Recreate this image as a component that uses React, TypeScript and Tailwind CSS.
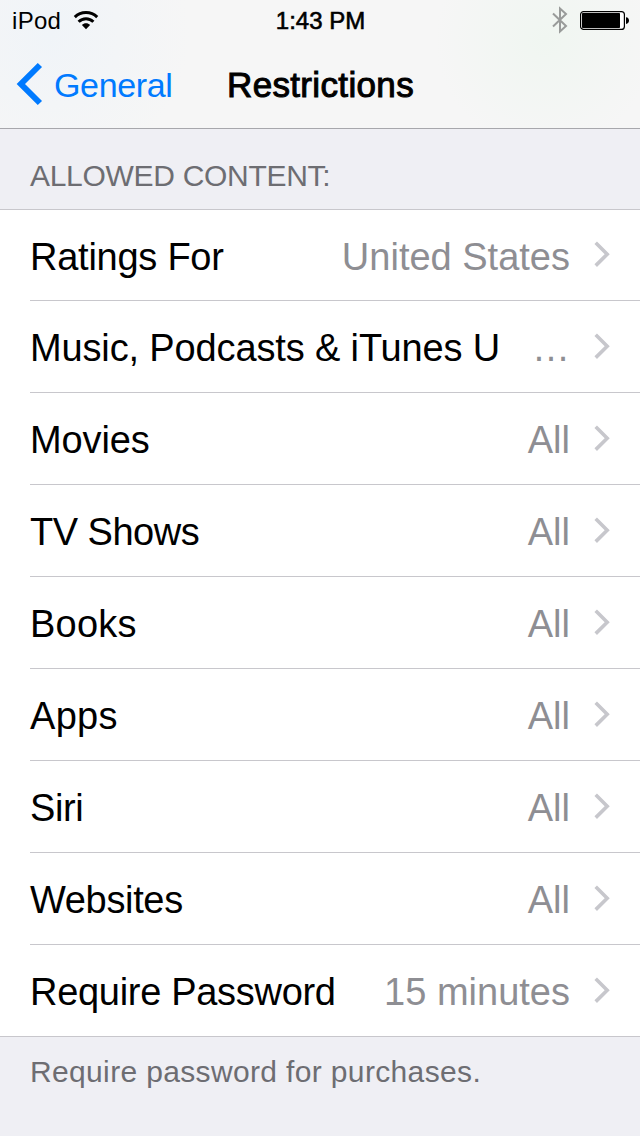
import clsx from "clsx";

type Row = {
  label: string;
  value: string;
  tracking: string;
};

const ROWS: Row[] = [
  { label: "Ratings For", value: "United States", tracking: "tracking-[-0.25px]" },
  { label: "Music, Podcasts & iTunes U", value: "…", tracking: "tracking-[-0.14px]" },
  { label: "Movies", value: "All", tracking: "tracking-[-0.1px]" },
  { label: "TV Shows", value: "All", tracking: "tracking-[-0.5px]" },
  { label: "Books", value: "All", tracking: "tracking-[0.25px]" },
  { label: "Apps", value: "All", tracking: "tracking-[0.3px]" },
  { label: "Siri", value: "All", tracking: "tracking-[-0.4px]" },
  { label: "Websites", value: "All", tracking: "tracking-[-0.35px]" },
  { label: "Require Password", value: "15 minutes", tracking: "tracking-[-0.3px]" },
];

const WifiIcon = () => (
  <svg width="26" height="20" viewBox="0 0 26 20" fill="none" stroke="#000" strokeWidth="3">
    <path d="M1.8 7.1C8 1.1 18 1.1 24.2 7.1" />
    <path d="M5.6 11.7C9.8 7.6 16.2 7.6 20.4 11.7" />
    <path d="M13 19.2 8.9 15C11.1 12.6 14.9 12.6 17.1 15Z" fill="#000" stroke="none" />
  </svg>
);

const BluetoothIcon = () => (
  <svg width="16" height="28" viewBox="0 0 16 28" fill="none" stroke="#999b9a" strokeWidth="2">
    <path d="M1 7.5 14 20 8 25.5V2.5L14 8 1 20.5" />
  </svg>
);

const BatteryIcon = () => (
  <svg width="49" height="20" viewBox="0 0 49 20">
    <rect x="0.6" y="1.6" width="43.8" height="17.8" rx="3" fill="#fff" stroke="#000" strokeWidth="1.2" />
    <rect x="2" y="3" width="38" height="15" rx="0.8" />
    <path d="M46 7.2C50 7.2 50 14 46 14Z" />
  </svg>
);

const Chevron = () => (
  <svg width="16" height="28" viewBox="0 0 16 28" fill="none" stroke="#c7c7cc" strokeWidth="3.6">
    <path d="M1.7 1.8 13.2 13.2 1.7 24.6" />
  </svg>
);

const StatusBar = () => (
  <div className="grid h-10 grid-cols-3 items-center pr-[11px] pl-3 text-2xl">
    <div className="flex items-center gap-3">
      <span className="pt-[2px] tracking-[0.3px]">iPod</span>
      <WifiIcon />
    </div>
    <span className="pt-[2px] text-center whitespace-nowrap [-webkit-text-stroke:0.6px_black]">
      1:43 PM
    </span>
    <div className="flex items-center justify-end gap-3">
      <BluetoothIcon />
      <BatteryIcon />
    </div>
  </div>
);

const NavBar = () => (
  <div className="grid h-[88px] grid-cols-[227px_188px_1fr] items-center text-[34px]">
    <button className="flex items-center gap-[11px] pl-4 text-[#007aff]">
      <svg width="27" height="44" viewBox="0 0 27 44" fill="none" stroke="currentColor" strokeWidth="6">
        <path d="M23.9 3 4.9 22 23.9 41" />
      </svg>
      <span className="pt-px tracking-[-0.35px]">General</span>
    </button>
    <h1 className="text-[35px] tracking-[0.35px] whitespace-nowrap [-webkit-text-stroke:1px_black]">
      Restrictions
    </h1>
  </div>
);

export default function App() {
  return (
    <main className="flex h-[1136px] w-[640px] flex-col overflow-hidden bg-[#efeff4] font-['Liberation_Sans',Arial,sans-serif] leading-none text-black">
      <header className="h-[129px] border-b border-[#a7a7ac] bg-[#f6f6f6] bg-[radial-gradient(circle_at_545px_40px,#f0f6f1_0,#f6f6f600_110px),radial-gradient(circle_at_50px_35px,#f0f4f8_0,#f6f6f600_140px)]">
        <StatusBar />
        <NavBar />
      </header>

      <h2 className="flex h-[81px] items-center border-b border-[#c8c7cc] px-[30px] pt-[13px] text-[30px] tracking-[-0.3px] text-[#6d6d72]">
        ALLOWED CONTENT:
      </h2>

      <ul className="bg-white text-[38px]">
        {ROWS.map((row, i) => {
          const last = i === ROWS.length - 1;
          return (
            <li
              key={row.label}
              className={clsx(
                i === 0 ? "h-[91px]" : "h-[92px]",
                last ? "border-b border-[#c8c7cc]" : "pl-[30px]",
              )}
            >
              <div
                className={clsx(
                  "flex h-full items-center pr-[30px]",
                  last ? "pl-[30px]" : "border-b border-[#c8c7cc]",
                )}
              >
                <span className={clsx("pt-[3px] whitespace-nowrap", row.tracking)}>{row.label}</span>
                <span className="mr-6 ml-auto pt-[3px] text-[#8e8e93]">{row.value}</span>
                <Chevron />
              </div>
            </li>
          );
        })}
      </ul>

      <p className="px-[30px] pt-5 text-[30px] tracking-[0.35px] text-[#6d6d72]">
        Require password for purchases.
      </p>
    </main>
  );
}
